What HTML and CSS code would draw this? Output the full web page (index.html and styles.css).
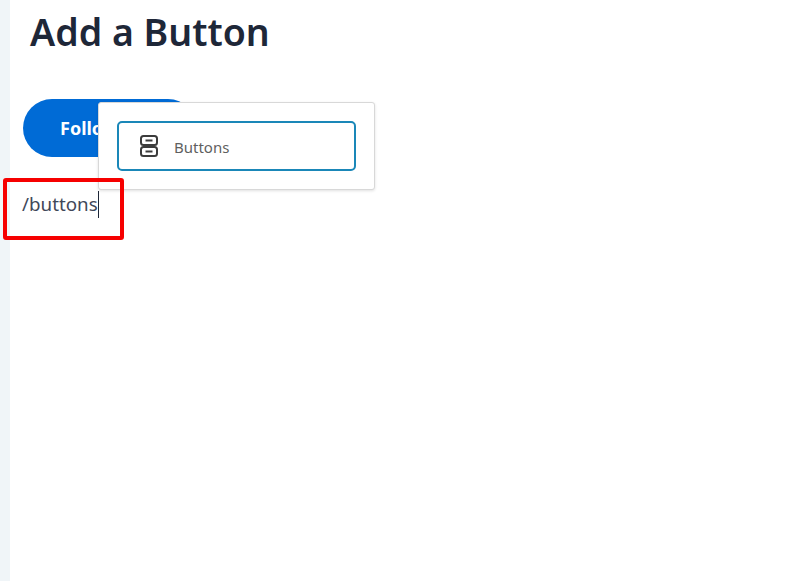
FILE: index.html
```html
<!DOCTYPE html>
<html lang="en">
<head>
<meta charset="UTF-8" />
<meta name="viewport" content="width=device-width, initial-scale=1" />
<title>Add a Button</title>
<link rel="stylesheet" href="styles.css">
</head>
<body>

<div class="page">
  <div class="side-strip"></div>

  <div class="editor">
    <h1 class="post-title">Add a Button</h1>

    <a class="follow-btn" href="#">Follow</a>

    <p class="slash-line">/buttons<span class="caret"></span></p>

    <!-- block inserter popup -->
    <div class="inserter">
      <div class="inserter-item">
        <svg class="inserter-icon" width="20" height="24" viewBox="0 0 20 24" fill="none" stroke="#3c3c3c">
          <rect x="2" y="2" width="16" height="9" rx="2.5" stroke-width="2" />
          <rect x="2" y="13" width="16" height="9" rx="2.5" stroke-width="2" />
          <path d="M6.5 6.5h7M6.5 17.5h7" stroke-width="2" />
        </svg>
        <span class="inserter-label">Buttons</span>
      </div>
    </div>

    <div class="red-box"></div>
  </div>
</div>

</body>
</html>
```

FILE: styles.css
```css
body {
  margin: 0;
  padding: 0;
  background-color: #fff;
  font-family: "Noto Sans", "Open Sans", sans-serif;
}

.page {
  display: flex;
  min-height: 581px;
}

.side-strip {
  width: 10px;
  flex-shrink: 0;
  background-color: #f0f5f8;
}

.editor {
  position: relative;
  flex: 1;
  padding-left: 13px;
}

.post-title {
  margin: 0;
  padding: 7px 0 0 7px;
  color: #1e2738;
  font-size: 37.5px;
  font-weight: 600;
  line-height: 49px;
}

.follow-btn {
  display: block;
  width: 109px;
  margin-top: 43px;
  padding: 0 28px 0 37px;
  background-color: #006bd6;
  border-radius: 29px;
  color: #fff;
  font-size: 18px;
  font-weight: 700;
  line-height: 58px;
  text-decoration: none;
}

.slash-line {
  margin: 34px 0 0 -1px;
  color: #3f4859;
  font-size: 18.8px;
  line-height: 27px;
}

.caret {
  display: inline-block;
  width: 1px;
  height: 27px;
  background-color: #1e2738;
  vertical-align: top;
}

.inserter {
  position: absolute;
  left: 88px;
  top: 102px;
  box-sizing: border-box;
  width: 277px;
  height: 88px;
  padding: 18px;
  background-color: #fff;
  border: 1px solid #d8d8d8;
  border-radius: 3px;
  box-shadow: 0 1px 3px rgba(0, 0, 0, 0.12);
}

.inserter-item {
  display: flex;
  align-items: center;
  gap: 15px;
  box-sizing: border-box;
  height: 50px;
  padding-left: 20px;
  border: 2.5px solid #1a87b8;
  border-radius: 5px;
  color: #5f5f5f;
  font-size: 15px;
}

.inserter-label {
  padding-top: 2px;
}

.red-box {
  position: absolute;
  left: -7px;
  top: 178px;
  box-sizing: border-box;
  width: 121px;
  height: 62px;
  border: 4px solid #f60000;
  border-radius: 3px;
}
```
